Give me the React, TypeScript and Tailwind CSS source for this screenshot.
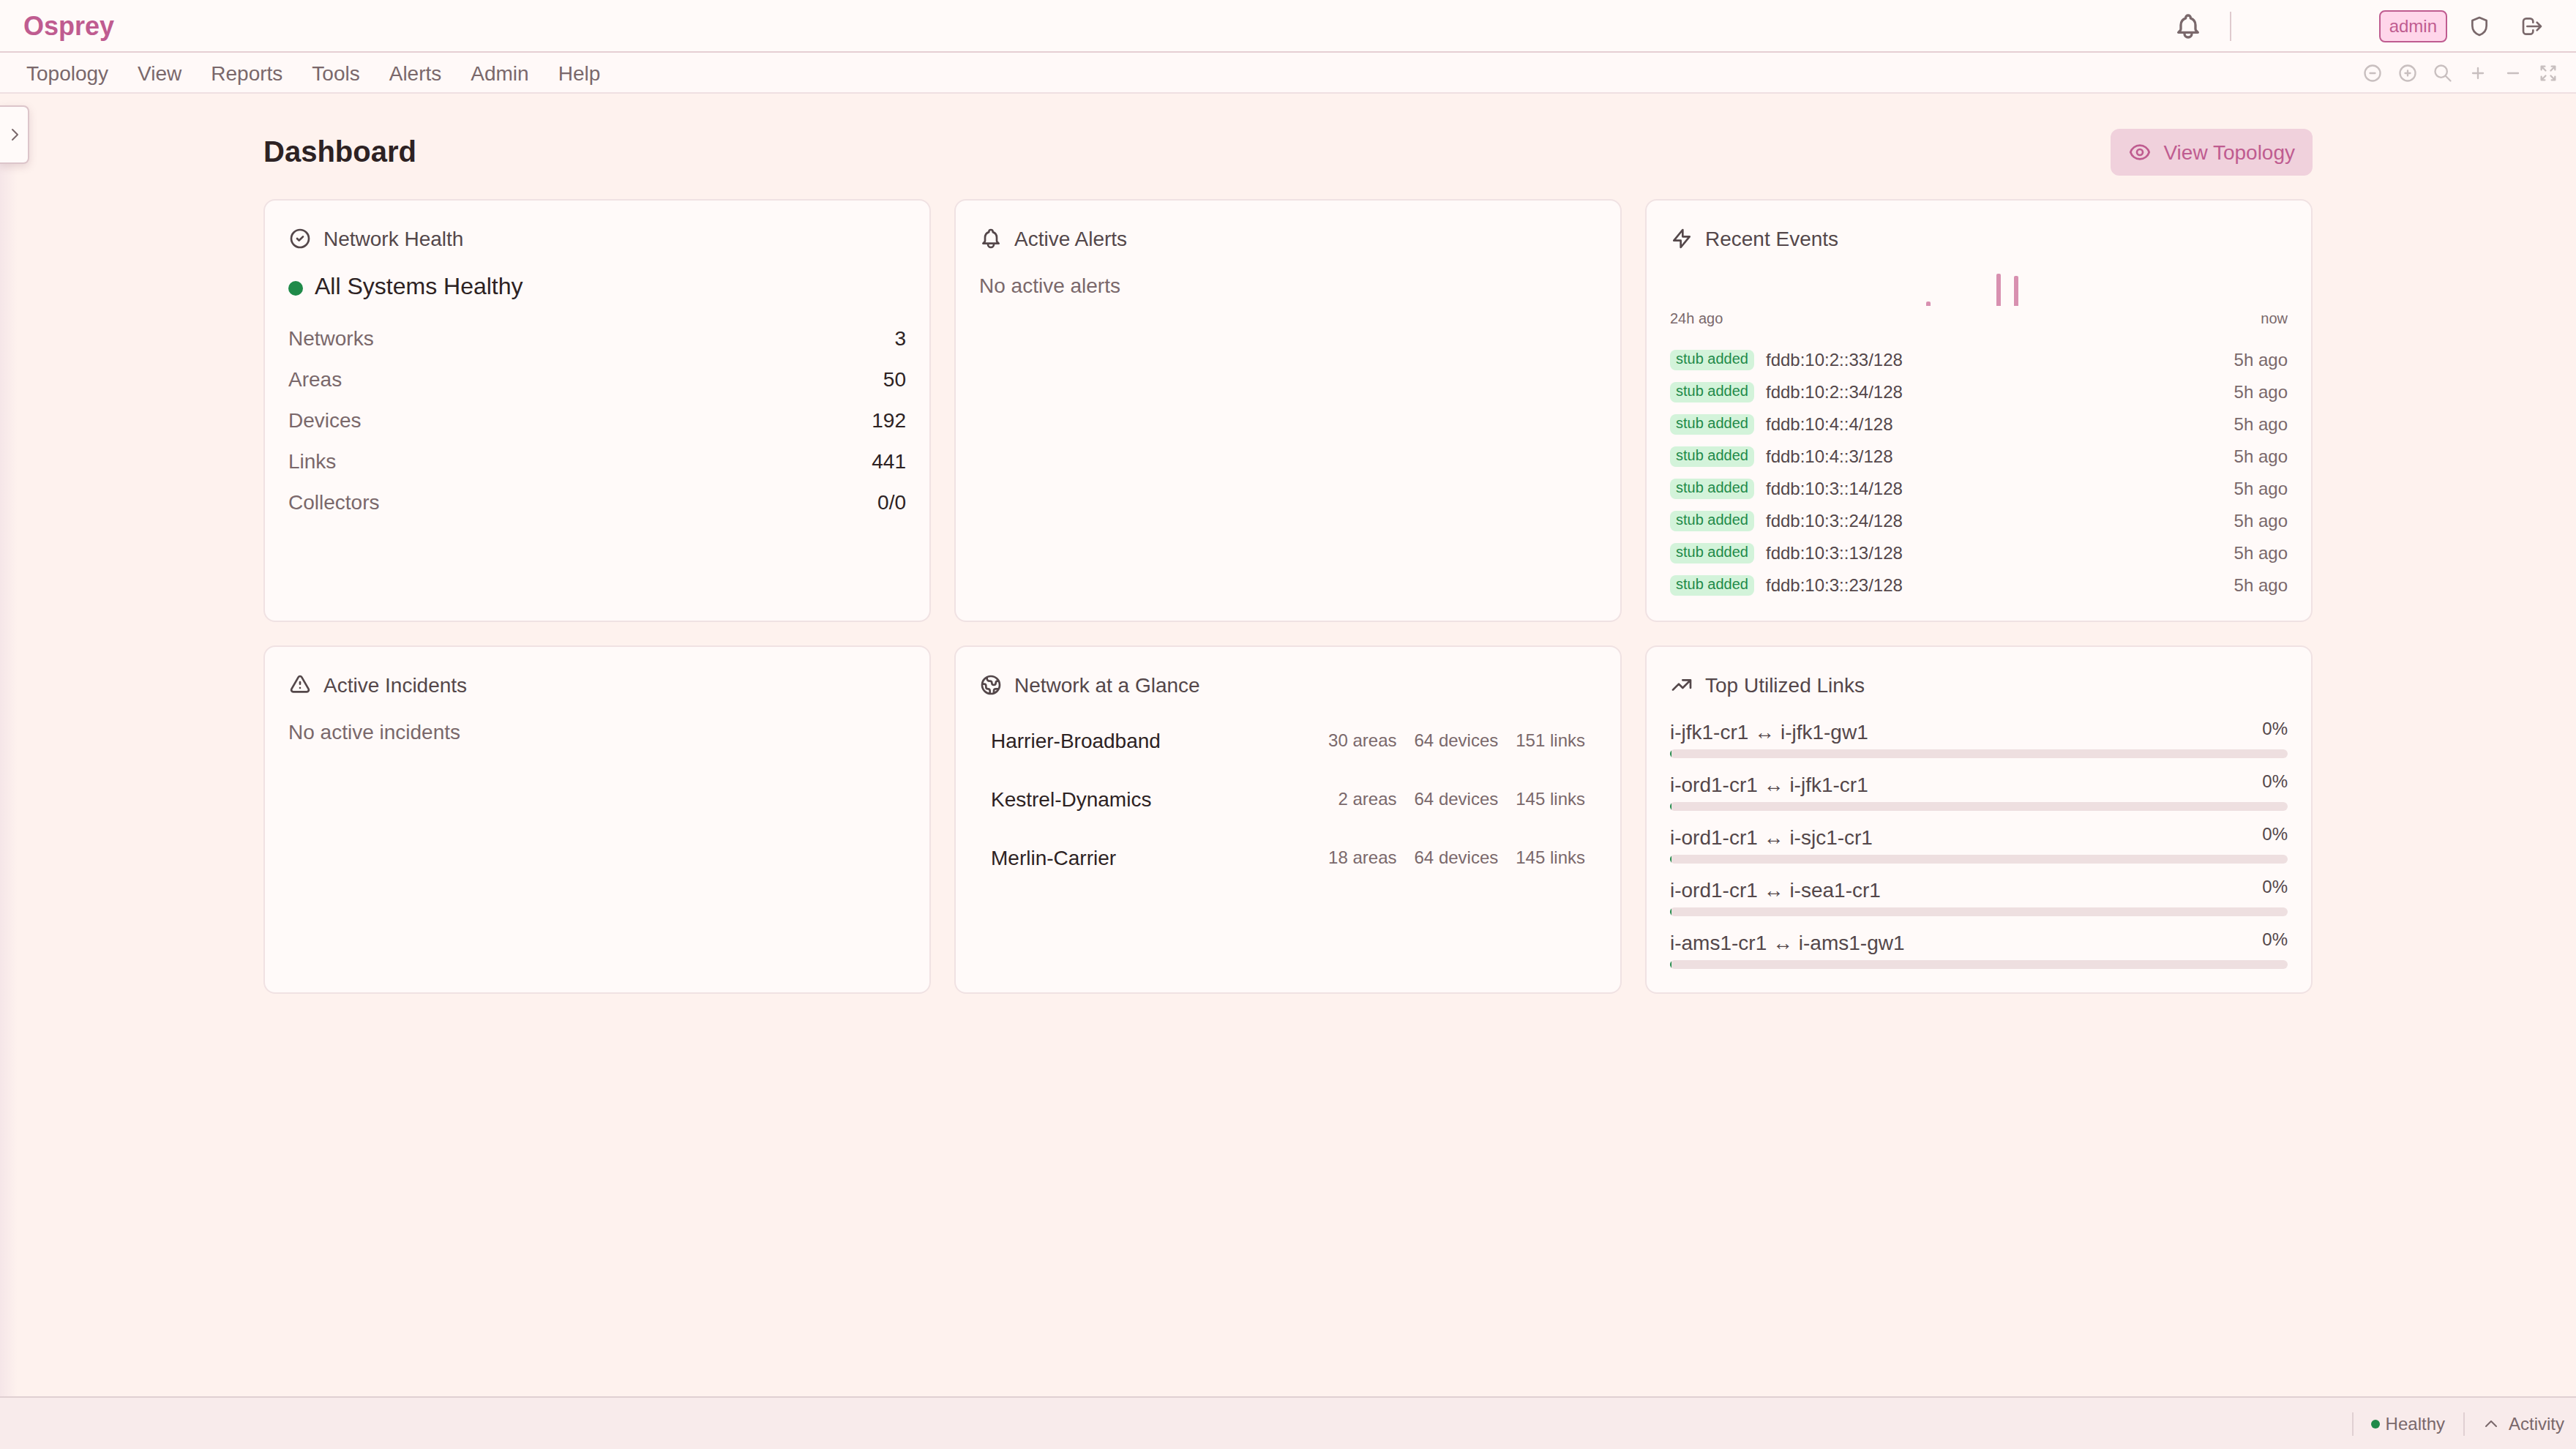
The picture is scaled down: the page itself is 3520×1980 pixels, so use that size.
import React from "react";

type IconProps = { size?: number; className?: string; d: string; d2?: string };

function Icon({ size = 32, className = "", d, d2 }: IconProps) {
  return (
    <svg
      width={size}
      height={size}
      viewBox="0 0 24 24"
      fill="none"
      stroke="currentColor"
      strokeWidth={2}
      strokeLinecap="round"
      strokeLinejoin="round"
      className={`shrink-0 ${className}`}
    >
      <path d={d} />
      {d2 ? <path d={d2} /> : null}
    </svg>
  );
}

const icons = {
  check: "M9 12l2 2 4-4m6 2a9 9 0 11-18 0 9 9 0 0118 0z",
  bell: "M15 17h5l-1.405-1.405A2.032 2.032 0 0118 14.158V11a6.002 6.002 0 00-4-5.659V5a2 2 0 10-4 0v.341C7.67 6.165 6 8.388 6 11v3.159c0 .538-.214 1.055-.595 1.436L4 17h5m6 0v1a3 3 0 11-6 0v-1m6 0H9",
  bolt: "M13 10V3L4 14h7v7l9-11h-7z",
  warn: "M12 9v2m0 4h.01m-6.938 4h13.856c1.54 0 2.502-1.667 1.732-3L13.732 4c-.77-1.333-2.694-1.333-3.464 0L3.34 16c-.77 1.333.192 3 1.732 3z",
  globe:
    "M3.055 11H5a2 2 0 012 2v1a2 2 0 002 2 2 2 0 012 2v2.945M8 3.935V5.5A2.500 2.500 0 0010.500 8h.5a2 2 0 012 2 2 2 0 104 0 2 2 0 012-2h1.064M15 20.488V18a2 2 0 012-2h3.064M21 12a9 9 0 11-18 0 9 9 0 0118 0z",
  trend: "M13 7h8m0 0v8m0-8l-8 8-4-4-6 6",
  eye: "M15 12a3 3 0 11-6 0 3 3 0 016 0z",
  eyeOutline:
    "M2.458 12C3.732 7.943 7.523 5 12 5c4.478 0 8.268 2.943 9.542 7-1.274 4.057-5.064 7-9.542 7-4.477 0-8.268-2.943-9.542-7z",
  shield: "M12 3l7.250 3v5.500c0 4.300-2.900 7.900-7.250 9.500-4.350-1.600-7.250-5.200-7.250-9.500V6L12 3z",
  logout: "M17 16l4-4m0 0l-4-4m4 4H7m6 4v1a3 3 0 01-3 3H6a3 3 0 01-3-3V7a3 3 0 013-3h4a3 3 0 013 3v1",
  chevronRight: "M9 5l7 7-7 7",
  chevronUp: "M5 15l7-7 7 7",
};

const toolbar = [
  "M15 12H9m12 0a9 9 0 11-18 0 9 9 0 0118 0z",
  "M12 9v3m0 0v3m0-3h3m-3 0H9m12 0a9 9 0 11-18 0 9 9 0 0118 0z",
  "M21 21l-6-6m2-5a7 7 0 11-14 0 7 7 0 0114 0z",
  "M12 6v6m0 0v6m0-6h6m-6 0H6",
  "M18 12H6",
  "M4 8V4m0 0h4M4 4l5 5m11-1V4m0 0h-4m4 0l-5 5M4 16v4m0 0h4m-4 0l5-5m11 5l-5-5m5 5v-4m0 4h-4",
];

function Card({ icon, title, children }: { icon: string; title: string; children: React.ReactNode }) {
  return (
    <section className="rounded-[16px] border-2 border-[#f0e2e3] bg-[#fffaf9] p-8">
      <h2 className="flex h-10 items-center gap-4 text-[28px] leading-9 text-[#54474a]">
        <Icon d={icon} />
        <span className="pt-0.5">{title}</span>
      </h2>
      {children}
    </section>
  );
}

const stats = [
  ["Networks", "3"],
  ["Areas", "50"],
  ["Devices", "192"],
  ["Links", "441"],
  ["Collectors", "0/0"],
];

const events = ["2::33", "2::34", "4::4", "4::3", "3::14", "3::24", "3::13", "3::23"];

const histogram = [0, 0, 0, 0, 0, 0, 0, 0, 0, 0, 0, 0, 0, 0, 6, 0, 0, 0, 44, 41, 0, 0, 0, 0, 0, 0, 0, 0, 0, 0, 0, 0, 0, 0];

const networks = [
  ["Harrier-Broadband", "30 areas", "64 devices", "151 links"],
  ["Kestrel-Dynamics", "2 areas", "64 devices", "145 links"],
  ["Merlin-Carrier", "18 areas", "64 devices", "145 links"],
];

const links = [
  ["i-jfk1-cr1", "i-jfk1-gw1"],
  ["i-ord1-cr1", "i-jfk1-cr1"],
  ["i-ord1-cr1", "i-sjc1-cr1"],
  ["i-ord1-cr1", "i-sea1-cr1"],
  ["i-ams1-cr1", "i-ams1-gw1"],
];

export default function App() {
  return (
    <div className="flex h-[1980px] w-[3520px] flex-col overflow-hidden bg-[#fef2ee] font-['Liberation_Sans',Arial,sans-serif] text-[#2d2223]">
      <header className="flex h-[72px] shrink-0 items-center border-b-2 border-[#e5cfd3] bg-[#fffaf9] pt-0.5 pr-11 pl-8">
        <span className="text-[36px] leading-none font-bold text-[#bf5c90]">Osprey</span>
        <div className="ml-auto flex items-center text-[#7a686b]">
          <Icon size={40} d={icons.bell} />
          <span className="ml-[37px] h-10 w-0.5 bg-[#dfcace]" />
          <span className="ml-[202px] flex h-11 items-center rounded-[8px] border-2 border-[#bf5c90] bg-[#ffd6ea] px-3 text-[24px] leading-none text-[#bf5c90]">
            admin
          </span>
          <Icon className="ml-7" d={icons.shield} />
          <Icon className="ml-10" d={icons.logout} />
        </div>
      </header>

      <nav className="flex h-14 shrink-0 items-center border-b-2 border-[#efe0e2] bg-[#fff9f8] pt-0.5 pl-4 text-[28px] text-[#7a686b]">
        {["Topology", "View", "Reports", "Tools", "Alerts", "Admin", "Help"].map((t) => (
          <span key={t} className="px-5 pt-0.5 leading-8">{t}</span>
        ))}
        <div className="mr-6 ml-auto flex items-center gap-5 text-[#c8bfbf]">
          {toolbar.map((d) => (
            <Icon key={d} size={28} d={d} />
          ))}
        </div>
      </nav>

      <div className="relative flex-1">
        <div className="absolute top-16 bottom-0 left-0 w-6 bg-gradient-to-r from-[#f5e6e8] to-[#fef2ee]" />
        <div className="absolute top-4 left-0 flex h-20 w-10 items-center justify-end rounded-r-[8px] border-2 border-l-0 border-[#dcc5ca] bg-[#fffaf9] pr-1.5 text-[#7a686b] shadow-[0_4px_12px_rgba(120,70,90,0.18)]">
          <Icon size={24} d={icons.chevronRight} />
        </div>

        <main className="mx-auto flex w-[2800px] flex-col pt-12">
          <div className="flex h-16 items-center justify-between">
            <h1 className="pb-0.5 text-[40px] leading-none font-bold">Dashboard</h1>
            <button className="flex h-16 items-center gap-4 rounded-[12px] bg-[#f0d1dc] px-6 text-[28px] text-[#bf5c90]">
              <Icon d={icons.eye} d2={icons.eyeOutline} />
              <span className="pt-0.5">View Topology</span>
            </button>
          </div>

          <div className="mt-8 grid grid-cols-3 grid-rows-[578px_476px] gap-8">
            <Card icon={icons.check} title="Network Health">
              <div className="mt-6 flex h-[42px] items-center gap-4 text-[32px] leading-10">
                <span className="mt-1.5 h-5 w-5 rounded-full bg-[#1f8a49]" />
                All Systems Healthy
              </div>
              <dl className="mt-[23px]">
                {stats.map(([k, v]) => (
                  <div key={k} className="flex h-14 items-center justify-between text-[28px]">
                    <dt className="text-[#7a686b]">{k}</dt>
                    <dd>{v}</dd>
                  </div>
                ))}
              </dl>
            </Card>

            <Card icon={icons.bell} title="Active Alerts">
              <p className="mt-6 text-[28px] leading-[42px] text-[#7a686b]">No active alerts</p>
            </Card>

            <Card icon={icons.bolt} title="Recent Events">
              <div className="mt-6 flex h-12 items-end pl-3.5">
                {histogram.map((h, i) => (
                  <span key={i} className="w-6 shrink-0">
                    <span className="block w-1.5 rounded-t-[2px] bg-[#d890b0]" style={{ height: h }} />
                  </span>
                ))}
              </div>
              <div className="mt-1 flex h-[26px] items-center justify-between text-[20px] text-[#7a686b]">
                <span>24h ago</span>
                <span>now</span>
              </div>
              <ul className="mt-[22px]">
                {events.map((e) => (
                  <li key={e} className="flex h-11 items-center text-[24px]">
                    <span className="h-7 rounded-[8px] bg-[#d3f3da] px-2 text-[20px] leading-6 text-[#1f8a49]">stub added</span>
                    <span className="ml-4 text-[#54474a]">fddb:10:{e}/128</span>
                    <span className="ml-auto text-[#7a686b]">5h ago</span>
                  </li>
                ))}
              </ul>
            </Card>

            <Card icon={icons.warn} title="Active Incidents">
              <p className="mt-6 text-[28px] leading-[42px] text-[#7a686b]">No active incidents</p>
            </Card>

            <Card icon={icons.globe} title="Network at a Glance">
              <div className="mt-4 flex flex-col">
                {networks.map(([n, a, d, l]) => (
                  <div key={n} className="flex h-20 items-center px-4 text-[28px]">
                    <span className="pt-0.5">{n}</span>
                    <span className="ml-auto flex gap-6 text-[24px] text-[#7a686b]">
                      <span>{a}</span>
                      <span>{d}</span>
                      <span>{l}</span>
                    </span>
                  </div>
                ))}
              </div>
            </Card>

            <Card icon={icons.trend} title="Top Utilized Links">
              <div className="mt-6 flex flex-col gap-4 text-[#54474a]">
                {links.map(([a, b]) => (
                  <div key={a + b} className="h-14">
                    <div className="flex h-11 items-start justify-between text-[28px] leading-[42px]">
                      <span>{a} ↔ {b}</span>
                      <span className="text-[24px] leading-8">0%</span>
                    </div>
                    <div className="h-3 overflow-hidden rounded-[6px] bg-[#eedfe0]">
                      <div className="h-full w-0.5 bg-[#1f8a49]" />
                    </div>
                  </div>
                ))}
              </div>
            </Card>
          </div>
        </main>
      </div>

      <footer className="flex h-[72px] shrink-0 items-center justify-end border-t-2 border-[#e0d0d2] bg-[#f8ebeb] pt-0.5 pr-4 text-[24px] text-[#7a686b]">
        <span className="h-8 w-0.5 bg-[#e0d0d2]" />
        <span className="ml-6 h-3 w-3 rounded-full bg-[#1f8a49]" />
        <span className="ml-2">Healthy</span>
        <span className="ml-[25px] h-8 w-0.5 bg-[#e0d0d2]" />
        <Icon size={24} className="ml-6" d={icons.chevronUp} />
        <span className="ml-3">Activity</span>
      </footer>
    </div>
  );
}
